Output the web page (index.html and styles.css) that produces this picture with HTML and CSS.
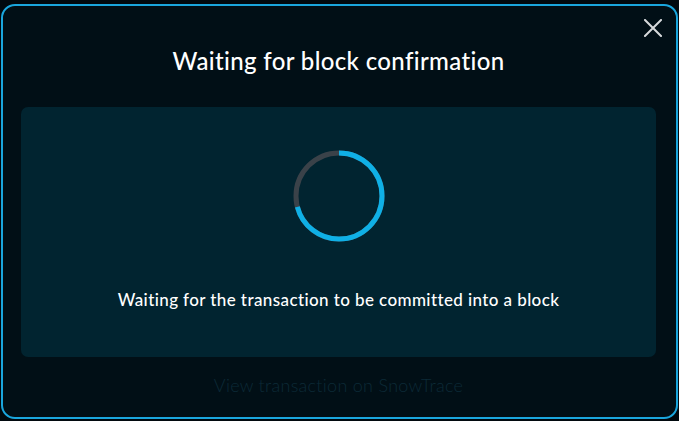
FILE: index.html
```html
<!DOCTYPE html>
<html lang="en">
<head>
    <meta charset="UTF-8">
    <meta name="viewport" content="width=device-width, initial-scale=1.0">
    <title>Waiting for block confirmation</title>
    <link rel="stylesheet" href="styles.css">
</head>
<body>
    <div class="modal">
        <button class="close" aria-label="Close">
            <svg width="18" height="18" viewBox="0 0 18 18">
                <path d="M1 1 L17 17 M17 1 L1 17" stroke="#d6d9db" stroke-width="2" stroke-linecap="square"/>
            </svg>
        </button>

        <h2 class="title">Waiting for block confirmation</h2>

        <div class="panel">
            <svg class="spinner" width="92" height="92" viewBox="0 0 92 92">
                <circle cx="46" cy="46" r="43" fill="none" stroke="#3a4249" stroke-width="5"/>
                <circle cx="46" cy="46" r="43" fill="none" stroke="#0fb0e6" stroke-width="5"
                        stroke-dasharray="191.4 300" transform="rotate(-90 46 46)"/>
            </svg>
            <p class="status">Waiting for the transaction to be committed into a block</p>
        </div>

        <a class="link">View transaction on SnowTrace</a>
    </div>
</body>
</html>
```

FILE: styles.css
```css
* {
    box-sizing: border-box;
}
body {
    margin: 0;
    padding: 4px 1px 2px;
    background-color: #01090e;
    font-family: Lato, "Noto Sans", sans-serif;
}
.modal {
    position: relative;
    height: 415px;
    border: 2px solid #1aa6dd;
    border-radius: 14px;
    background: #010f16;
    padding: 0 20px 0 18px;
    display: flex;
    flex-direction: column;
    align-items: center;
}
.close {
    position: absolute;
    top: 13px;
    right: 14px;
    background: none;
    border: none;
    padding: 0;
    cursor: pointer;
}
.close svg {
    display: block;
}
.title {
    margin: 40px 0 0;
    font-size: 24px;
    line-height: 30px;
    font-weight: 500;
    letter-spacing: 0.35px;
    color: #ffffff;
    text-align: center;
}
.panel {
    width: 100%;
    height: 250px;
    margin-top: 31px;
    background: #012430;
    border-radius: 7px;
    display: flex;
    flex-direction: column;
    align-items: center;
    padding-top: 43px;
}
.spinner {
    display: block;
}
.status {
    margin: 47px 0 0;
    font-size: 17px;
    line-height: 22px;
    font-weight: 500;
    letter-spacing: 0.4px;
    color: #ffffff;
}
.link {
    margin-top: 17px;
    font-size: 18px;
    line-height: 22px;
    font-weight: 300;
    letter-spacing: 0.28px;
    color: #0c2a36;
}
```
